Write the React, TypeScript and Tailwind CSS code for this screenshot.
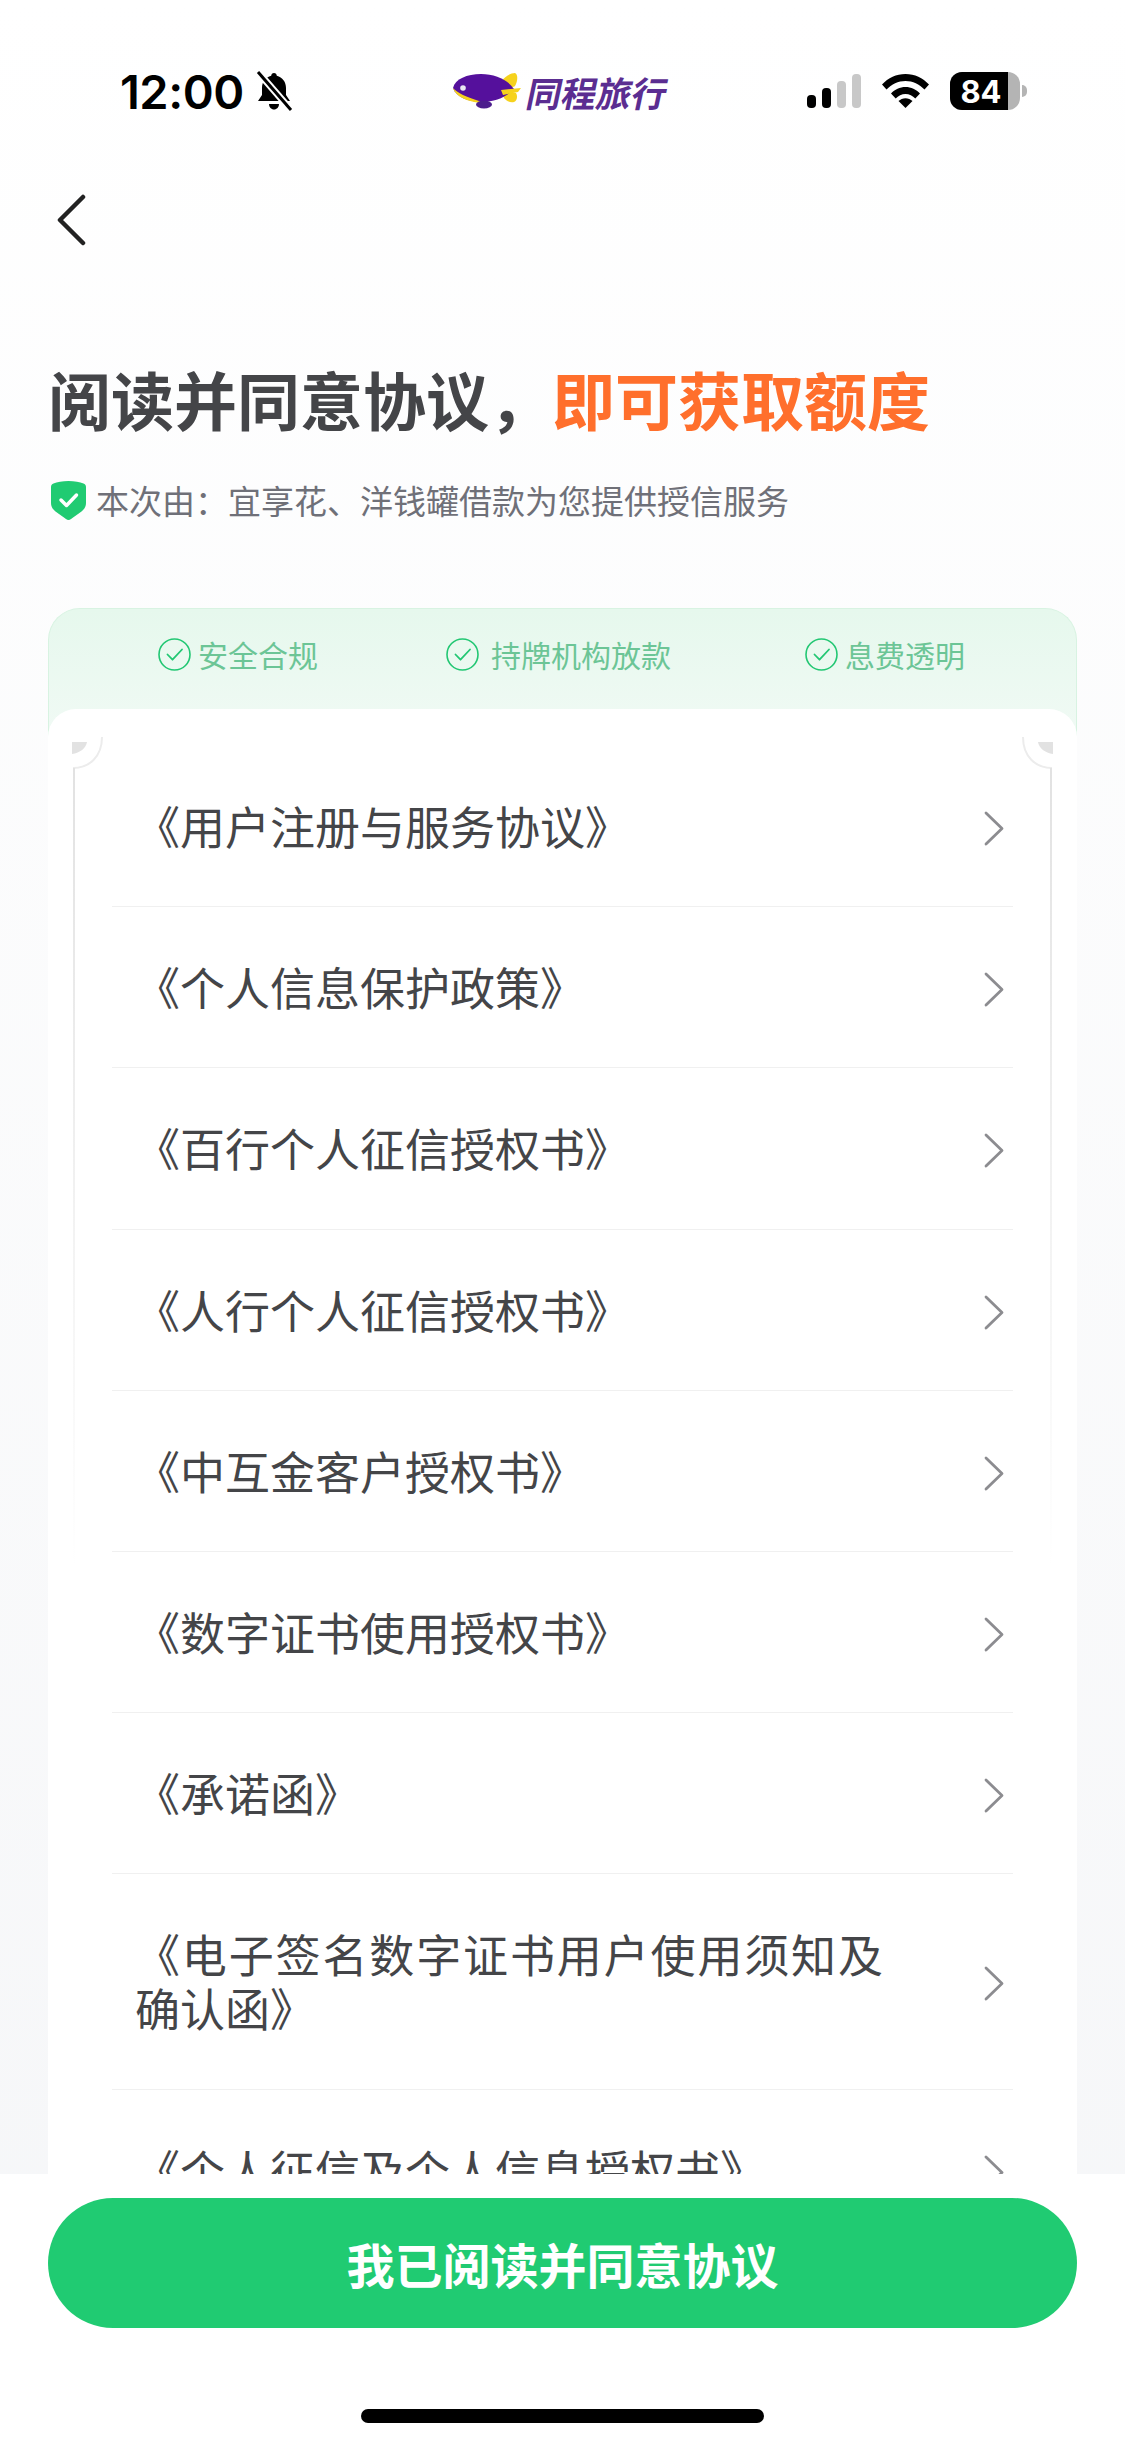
const cjk = "font-['Noto_Sans_CJK_SC','Noto_Sans',sans-serif]";

const rows = [
  "《用户注册与服务协议》",
  "《个人信息保护政策》",
  "《百行个人征信授权书》",
  "《人行个人征信授权书》",
  "《中互金客户授权书》",
  "《数字证书使用授权书》",
  "《承诺函》",
  "《电子签名数字证书用户使用须知及确认函》",
  "《个人征信及个人信息授权书》",
];

function StatusBar() {
  return (
    <div className="flex h-[182px] shrink-0 items-center">
      <span className="ml-[120px] w-[122px] font-['Inter',sans-serif] text-[47px] leading-none font-semibold tracking-[-0.5px] text-black">12:00</span>
      <svg className="ml-[13px]" width="38" height="40" viewBox="0 0 38 40">
        <path d="M19 2c1.600 0 2.800 1.200 2.800 2.700C27.500 6 31 11 31 17v7l4 6H3l4-6v-7c0-6 3.500-11 9.200-12.300C16.200 3.200 17.400 2 19 2z" fill="#000" />
        <path d="M14 33h10c0 3-2.200 5.500-5 5.500S14 36 14 33z" fill="#000" />
        <path d="M3 1l33 38" stroke="#fff" strokeWidth="7" />
        <path d="M3 1l33 38" stroke="#000" strokeWidth="3" />
      </svg>
      <svg className="ml-[160px]" width="68" height="36" viewBox="0 0 68 36">
        <path d="M49 8C52 3 58 0 62 0c3 1 3 8 0 13-2 2-8 1-13-5z" fill="#f6d21c" />
        <path d="M50 23c4-3 9-4 13-3 2 3 1 8-2 9-4 1-9-1-11-6z" fill="#f6d21c" />
        <path d="M0 15C2 6 14 1 28 1c14 0 27 6 33 15-7 8-19 13-32 13C16 29 3 24 0 15z" fill="#55109c" />
        <path d="M0 15c4 5 14 9 26 13 3 1 4 1 8 1-3 1-9 1-13 0C11 27 2 22 0 15z" fill="#f6d21c" />
        <path d="M48 17l20-2-3 4-15 3z" fill="#f6d21c" />
        <ellipse cx="31" cy="31.500" rx="8" ry="4" fill="#4b1d8c" />
        <circle cx="10" cy="15" r="2.800" fill="#e9e6f2" />
      </svg>
      <span className={`ml-[3px] w-[140px] ${cjk} origin-bottom -skew-x-12 text-[35px] leading-none font-bold whitespace-nowrap text-[#5b2d91]`}>同程旅行</span>
      <div className="ml-[143px] flex h-[34px] items-end gap-[6px]">
        <div className="h-[13px] w-[9px] rounded-[4px] bg-black" />
        <div className="h-[20px] w-[9px] rounded-[4px] bg-black" />
        <div className="h-[27px] w-[9px] rounded-[4px] bg-[#c8c8c8]" />
        <div className="h-[34px] w-[9px] rounded-[4px] bg-[#c8c8c8]" />
      </div>
      <svg className="ml-[21px]" width="47" height="34" viewBox="0 0 47 34">
        <path d="M0 10.500C6.200 4 14.300 0 23.500 0S40.800 4 47 10.500l-4.500 5C37.400 10.300 30.800 7 23.500 7S9.600 10.300 4.500 15.500z" fill="#000" />
        <path d="M9 19.500C12.800 15.600 17.900 13 23.500 13s10.700 2.600 14.500 6.500l-4.700 5C30.700 21.800 27.300 20 23.500 20s-7.200 1.800-9.800 4.500z" fill="#000" />
        <path d="M16.500 27c1.900-1.700 4.300-2.800 7-2.800s5.100 1.100 7 2.800l-7 7z" fill="#000" />
      </svg>
      <div className="ml-[21px] flex items-center">
        <div className="flex h-[38px] w-[70px] overflow-hidden rounded-[12px] bg-[#b4b4b4]">
          <div className="flex w-[58px] items-center justify-center bg-black pl-[4px] font-['Inter',sans-serif] text-[31px] leading-none font-bold text-white">84</div>
        </div>
        <div className="ml-[2px] h-[12px] w-[5px] rounded-r-[5px] bg-[#b4b4b4]" />
      </div>
    </div>
  );
}

function Check() {
  return (
    <svg width="33" height="33" viewBox="0 0 33 33" fill="none" className="shrink-0">
      <circle cx="16.500" cy="16.500" r="15.500" stroke="#22c773" strokeWidth="1.600" />
      <path d="M9.500 16.500l5 5.200 9.500-10.200" stroke="#22c773" strokeWidth="1.800" strokeLinecap="round" strokeLinejoin="round" />
    </svg>
  );
}

function Corner({ flip }: { flip?: boolean }) {
  return (
    <svg width="32" height="36" viewBox="0 0 32 36" fill="none" className={flip ? "absolute top-[24px] right-[24px] -scale-x-100" : "absolute top-[24px] left-[24px]"}>
      <path d="M1 35C17 35 30 24 30 4" stroke="#ececec" strokeWidth="2" />
      <path d="M0 9h15c-1 6-7 11-15 12z" fill="#e2e2e2" />
    </svg>
  );
}

function Chevron() {
  return (
    <svg width="21" height="35" viewBox="0 0 21 35" fill="none" className="mt-[5px] shrink-0">
      <path d="M2 2l16 15.500L2 33" stroke="#8c8c90" strokeWidth="2.800" strokeLinecap="round" strokeLinejoin="round" />
    </svg>
  );
}

export default function App() {
  return (
    <div className={`flex h-[2446px] w-[1125px] flex-col overflow-hidden bg-gradient-to-b from-white to-[#f5f6f8] ${cjk}`}>
      <div className="flex min-h-0 flex-1 flex-col overflow-hidden">
        <StatusBar />
        <div className="h-[176px] shrink-0 pt-[12px] pl-[55px]">
          <svg width="32" height="52" viewBox="0 0 32 52" fill="none">
            <path d="M28 3L5 26l23 23" stroke="#222222" strokeWidth="4.500" strokeLinecap="round" strokeLinejoin="round" />
          </svg>
        </div>
        <h1 className="ml-[48px] h-[80px] shrink-0 text-[63px] leading-[80px] font-bold whitespace-nowrap text-[#444548]">
          阅读并同意协议，<span className="text-[#ff6f2c]">即可获取额度</span>
        </h1>
        <div className="mt-[40px] ml-[51px] flex h-[44px] shrink-0 items-center">
          <svg width="35" height="39" viewBox="0 0 35 39" fill="none" className="shrink-0">
            <path d="M17.500 0c6 0 11.500 1 15 2.500 1.500.6 2.500 1.800 2.500 3.500v16c0 3.500-1.500 6-4.500 8.500L20 38c-1.500 1.200-3.500 1.200-5 0L4.500 30.500C1.500 28 0 25.500 0 22V6c0-1.700 1-2.900 2.500-3.500C6 1 11.500 0 17.500 0z" fill="#20cb72" />
            <path d="M10 19l5.500 5.500L25.500 14" stroke="#fff" strokeWidth="3.500" strokeLinecap="round" strokeLinejoin="round" />
          </svg>
          <span className="ml-[10px] text-[33px] leading-[44px] whitespace-nowrap text-[#6f7078]">本次由：宜享花、洋钱罐借款为您提供授信服务</span>
        </div>
        <div className="mx-[48px] mt-[86px] flex shrink-0 flex-col">
          <div className="-mb-[34px] flex h-[135px] items-start justify-center gap-[128px] rounded-t-[32px] border-x border-t border-[#d8f3e2] bg-gradient-to-b from-[#e6f8ed] to-[#f1faf5] pt-[28px] pr-[2px]">
            {[
              ["安全合规", "ml-[7px]", ""],
              ["持牌机构放款", "ml-[12px]", "mr-[6px]"],
              ["息费透明", "ml-[7px]", ""],
            ].map(([t, m, r]) => (
              <div key={t} className={`flex items-center ${r}`}>
                <Check />
                <span className={`${m} text-[30px] leading-[34px] whitespace-nowrap text-[#6cc596]`}>{t}</span>
              </div>
            ))}
          </div>
          <div className="relative rounded-t-[28px] bg-white px-[64px] pt-[37px]">
            <Corner />
            <Corner flip />
            <div className="absolute top-[59px] left-[25px] h-[800px] w-[2px] bg-gradient-to-b from-[#e2e2e2] to-transparent" />
            <div className="absolute top-[59px] right-[25px] h-[800px] w-[2px] bg-gradient-to-b from-[#e2e2e2] to-transparent" />
            {rows.map((t) => (
              <div key={t} className="flex items-center justify-between border-b border-[#f0f0f0] py-[53.1px] pr-[8px] pl-[23px]">
                <span className="w-[748px] text-justify text-[45px] leading-[54px] text-[#444548]">{t}</span>
                <Chevron />
              </div>
            ))}
          </div>
        </div>
      </div>
      <div className="flex h-[272px] shrink-0 flex-col items-center bg-white pt-[24px]">
        <button className="h-[130px] w-[1029px] rounded-full bg-[#20cb72] text-[48px] font-bold text-white">我已阅读并同意协议</button>
        <div className="mt-[81px] h-[14px] w-[403px] rounded-full bg-black" />
      </div>
    </div>
  );
}
